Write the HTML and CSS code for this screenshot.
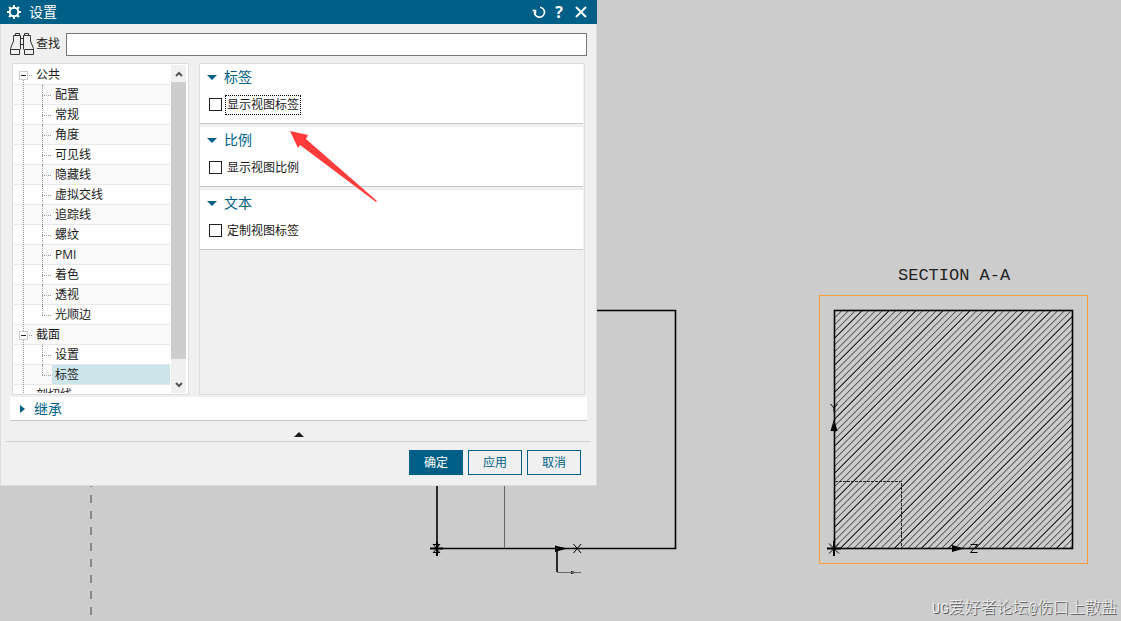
FILE: index.html
```html
<!DOCTYPE html>
<html lang="zh-CN">
<head>
<meta charset="utf-8">
<title>设置</title>
<link rel="stylesheet" href="styles.css">
</head>
<body>
<main class="workspace">
  <svg class="drawing" viewBox="0 0 1121 621" preserveAspectRatio="xMinYMin meet" role="img" aria-label="SECTION A-A">
    <defs>
      <clipPath id="section-area"><rect x="834" y="310" width="239" height="238"/></clipPath>
    </defs>
    <path class="dash" d="M91 479 V621"/>
    <path class="edge" d="M437 480 V548.500 H675.500 V310.500 H590"/>
    <path class="thin" d="M504.500 480 V548"/>
    <path class="axis" d="M430 548.500 H443 M437 542 V556"/>
    <path class="glyph" d="M433 544 L440 553 M440 544 L433 553 M433 544.500 H440 M433 552.500 H440"/>
    <path class="solid" d="M555 545.500 L567 548.500 L555 552 Z M571 571 L577 572.500 L571 574 Z"/>
    <path class="edge" d="M557 549 V572"/>
    <path class="thin" d="M557 572.500 H581"/>
    <path class="glyph" d="M573.500 544 L581 553 M581 544 L573.500 553"/>

    <rect class="view-frame" x="819.5" y="295.5" width="268" height="268"/>
    <g clip-path="url(#section-area)">
      <path class="hatch" d="M834 310 L1073 549"/>
      <path class="hatch hatch-dark" d="M834 310 L1073 549"/>
    </g>
    <rect class="edge" x="834.5" y="310.500" width="238" height="238"/>
    <path class="hidden-line" d="M835 481.500 H901.500 V548"/>
    <path class="axis" d="M827 548.500 H841 M834 541 V556"/>
    <path class="glyph" d="M829 543.500 L839 553.500 M839 543.500 L829 553.500 M830.500 404 L834 408 L837.500 404 M834 408 V412 M970.500 544.500 H977.500 L970.500 552.500 H977.500 M971 548.500 H977"/>
    <path class="solid" d="M834 419 L837.500 431 H830.500 Z M952 545 L964 548.500 L952 552 Z"/>
    <text class="view-name" x="898" y="280">SECTION A-A</text>
  </svg>

  <form class="dialog" aria-label="设置">
    <header class="titlebar">
      <svg class="gear" viewBox="0 0 16 16" aria-hidden="true">
        <circle cx="8" cy="8" r="4.300"/>
        <path d="M8 1V3.500M8 12.500V15M1 8H3.500M12.500 8H15M3 3L4.800 4.800M11.200 11.200L13 13M13 3L11.200 4.800M4.800 11.200L3 13"/>
      </svg>
      <h1>设置</h1>
      <button type="button" aria-label="重置"><svg viewBox="0 0 14 14"><path class="ring" d="M2.500 6.500A5 5 0 1 0 8 2.200M.5 5.500H3.500V8.500"/></svg></button>
      <button type="button" class="help" aria-label="帮助">?</button>
      <button type="button" aria-label="关闭"><svg viewBox="0 0 14 14"><path d="M2 2L12 12M12 2L2 12"/></svg></button>
    </header>

    <div class="search">
      <svg class="binoculars" viewBox="0 0 24 24" aria-hidden="true">
        <path d="M5.500 3.500V1.500H9.500V3.500M14.500 3.500V1.500H18.500V3.500M3.500 5.500V3.500H10.500V17.500M20.500 5.500V3.500H13.500V17.500M3.500 5.500V9L.5 16.500V22.500H9.500V17.500H.5M20.500 5.500V9L23.500 16.500V22.500H14.500V17.500H23.500M10.500 6.500H13.500M10.500 12.500H13.500"/>
      </svg>
      <label for="find">查找</label>
      <input id="find" type="text">
    </div>

    <div class="panes">
      <div class="tree-box">
        <ul class="tree">
          <li class="group"><i class="minus"></i>公共</li>
          <li>配置</li>
          <li>常规</li>
          <li>角度</li>
          <li>可见线</li>
          <li>隐藏线</li>
          <li>虚拟交线</li>
          <li>追踪线</li>
          <li>螺纹</li>
          <li>PMI</li>
          <li>着色</li>
          <li>透视</li>
          <li class="last">光顺边</li>
          <li class="group"><i class="minus"></i>截面</li>
          <li>设置</li>
          <li class="last selected"><span>标签</span></li>
          <li class="group">剖切线</li>
        </ul>
        <div class="scrollbar" aria-hidden="true">
          <svg viewBox="0 0 8 6"><path d="M1 5L4 2L7 5"/></svg>
          <div class="thumb"></div>
          <svg viewBox="0 0 8 6"><path d="M1 1L4 4L7 1"/></svg>
        </div>
      </div>

      <div class="options">
        <section>
          <h2><i class="open"></i>标签</h2>
          <label class="check focused"><input type="checkbox"><span>显示视图标签</span></label>
        </section>
        <section>
          <h2><i class="open"></i>比例</h2>
          <label class="check"><input type="checkbox"><span>显示视图比例</span></label>
        </section>
        <section>
          <h2><i class="open"></i>文本</h2>
          <label class="check"><input type="checkbox"><span>定制视图标签</span></label>
        </section>
      </div>
    </div>

    <h2 class="inherit"><i class="closed"></i>继承</h2>
    <div class="collapse"><i class="up"></i></div>
    <footer class="actions">
      <button type="submit" class="primary">确定</button>
      <button type="button">应用</button>
      <button type="button">取消</button>
    </footer>
  </form>

  <svg class="pointer" viewBox="0 0 88 73" aria-hidden="true"><path d="M0 0L18 4L16 8L87 70L86 71L10 14L8 17Z"/></svg>
  <p class="watermark"><span>UG</span>爱好者论坛<span>@</span>伤口上散盐</p>
</main>
</body>
</html>
```
FILE: styles.css
```css
* { box-sizing: border-box; }
body {
  margin: 0;
  background: #ccc;
  color: #1a1a1a;
  font: 12px/20px "Open Sans", "Noto Sans CJK SC", sans-serif;
}
h1, h2, p, ul { margin: 0; padding: 0; font-weight: 400; }
.workspace { position: relative; min-height: 100vh; overflow: hidden; }

.drawing { position: absolute; top: 0; left: 0; width: 100%; }
.drawing path, .drawing rect { stroke-width: 1; }
.drawing path { fill: none; }
.drawing .edge { fill: none; stroke: #000; stroke-width: 1.6; }
.drawing .axis { stroke: #000; stroke-width: 2; }
.drawing .thin { stroke: #666; }
.drawing .glyph { stroke: #000; }
.drawing .solid { fill: #000; }
.drawing .dash { stroke: #888; stroke-width: 2; stroke-dasharray: 8 8; }
/* one very wide diagonal stroke whose dashes are the hatch lines */
.drawing .hatch { stroke: #333; stroke-width: 344; stroke-dasharray: .7 4.073; stroke-dashoffset: -.84; }
.drawing .hatch-dark { stroke: #000; stroke-dasharray: .7 18.392; }
.drawing .hidden-line { stroke: #222; stroke-dasharray: 3 1; }
.drawing .view-frame { fill: none; stroke: #ff9c3c; }
.view-name { font: 17px "Liberation Mono", monospace; fill: #222; }

.dialog {
  position: relative;
  width: 597px;
  max-width: 100%;
  padding-bottom: 10px;
  background: #f0f0f0;
  border: solid #dcdcdc;
  border-width: 0 1px 1px;
}
.titlebar {
  display: flex;
  align-items: center;
  height: 24px;
  margin: 0 -1px;
  padding: 0 9px 0 6px;
  background: #005f87;
  color: #fff;
}
.titlebar h1 { flex: 1; margin-left: 7px; font-size: 14px; }
.titlebar svg { display: block; width: 14px; height: 14px; fill: none; stroke: #fff; stroke-width: 2; }
.titlebar .gear { width: 16px; height: 16px; }
.titlebar .ring { stroke-width: 1.6; }
.titlebar button { padding: 0; border: 0; background: none; color: #fff; }
.titlebar .help { width: 10px; margin: 0 10px 0 8px; font: 700 16px/20px "Open Sans", sans-serif; }

.search { display: flex; align-items: center; padding: 8px 9px 0; }
.binoculars { width: 24px; height: 24px; fill: none; stroke: #333; }
.search label { margin: 0 6px 0 2px; }
.search input { flex: 1; min-width: 0; height: 23px; border: 1px solid #767676; background: #fff; }

.panes { display: flex; gap: 10px; height: 332px; margin: 7px 11px 0; }
.tree-box { display: flex; width: 177px; padding: 1px; border: 1px solid #dcdcdc; background: #fff; overflow: hidden; }
.tree { position: relative; flex: 1; overflow: hidden; list-style: none; }
.tree::before { content: ""; position: absolute; z-index: 1; top: 12px; bottom: 0; left: 9px; border-left: 1px dotted #999; }
.tree li { position: relative; height: 20px; padding-left: 41px; border-bottom: 1px solid #e8e8e8; }
.tree li:nth-child(even) { background: #fafafa; }
.tree li.group { padding-left: 22px; }
.tree li:not(.group)::before { content: ""; position: absolute; top: 0; left: 28px; height: 20px; border-left: 1px dotted #999; }
.tree li.last::before { height: 10px; }
.tree li:not(.group)::after { content: ""; position: absolute; top: 10px; left: 28px; width: 9px; border-top: 1px dotted #999; }
.tree .selected { padding-left: 38px; }
.selected span { display: block; height: 19px; padding-left: 3px; background: #cce5ea; }
.minus { position: absolute; z-index: 2; top: 6px; left: 5px; width: 9px; height: 9px; border: 1px solid #ccc; background: linear-gradient(#222, #222) center / 5px 1px no-repeat #fff; }
.group .minus::after { content: ""; position: absolute; top: 3px; left: 9px; width: 3px; border-top: 1px dotted #999; }
.scrollbar { display: flex; flex-direction: column; align-items: center; justify-content: space-between; width: 17px; padding-bottom: 5px; border: solid #fff; border-width: 0 1px; background: #f0f0f0; }
.scrollbar svg { width: 8px; height: 6px; margin: 6px 0 5px; fill: none; stroke: #555; stroke-width: 2; }
.scrollbar svg:last-child { margin: 0; }
.thumb { width: 15px; height: 277px; margin-bottom: auto; background: #cdcdcd; }

.options { flex: 1; padding-right: 1px; border: 1px solid #dcdcdc; }
.options section { height: 60px; margin-bottom: 3px; padding: 3px 7px 0; border-bottom: 1px solid #c8c8c8; background: #fff; }
h2 { display: flex; align-items: center; color: #005f87; font-size: 14px; line-height: 20px; }
.open { margin-right: 7px; border: 5px solid transparent; border-width: 5px 5px 0; border-top-color: #005f87; }
.closed { margin-right: 9px; border: solid transparent; border-width: 4px 0 4px 5px; border-left-color: #005f87; }
.up { border: solid transparent; border-width: 0 5px 5px; border-bottom-color: #1a1a1a; }
.check { display: flex; align-items: center; width: max-content; margin: 8px 0 0 2px; }
.check input { appearance: none; width: 13px; height: 13px; margin: 0 3px 1px 0; border: 1px solid #222; background: #fff; }
.check span { padding: 0 1px; border: 1px solid transparent; line-height: 18px; }
.focused span { border: 1px dotted #000; }

.inherit { height: 24px; margin: 2px 9px 0; padding-left: 10px; border-bottom: 1px solid #c8c8c8; background: #fff; }
.collapse { display: flex; align-items: center; justify-content: center; height: 21px; margin: 0 5px; padding-top: 7px; border-bottom: 1px solid #d0d0d0; }
.actions { display: flex; justify-content: flex-end; gap: 5px; padding: 8px 15px 0; }
.actions button { width: 54px; height: 25px; padding: 0; border: 1px solid #005f87; background: #f0f0f0; color: #005f87; font: inherit; }
.actions .primary { background: #005f87; color: #fff; }

.pointer { position: absolute; top: 131px; left: 290px; width: 88px; height: 73px; fill: #ff3b3b; }
.watermark { position: absolute; right: 4px; bottom: 2px; color: #f0f0f0; font-family: "Noto Sans CJK SC", sans-serif; font-size: 16px; font-weight: 300; text-shadow: 1px 1px 0 #555; }
.watermark span { font-family: "Liberation Mono", monospace; font-size: 14px; }
```
